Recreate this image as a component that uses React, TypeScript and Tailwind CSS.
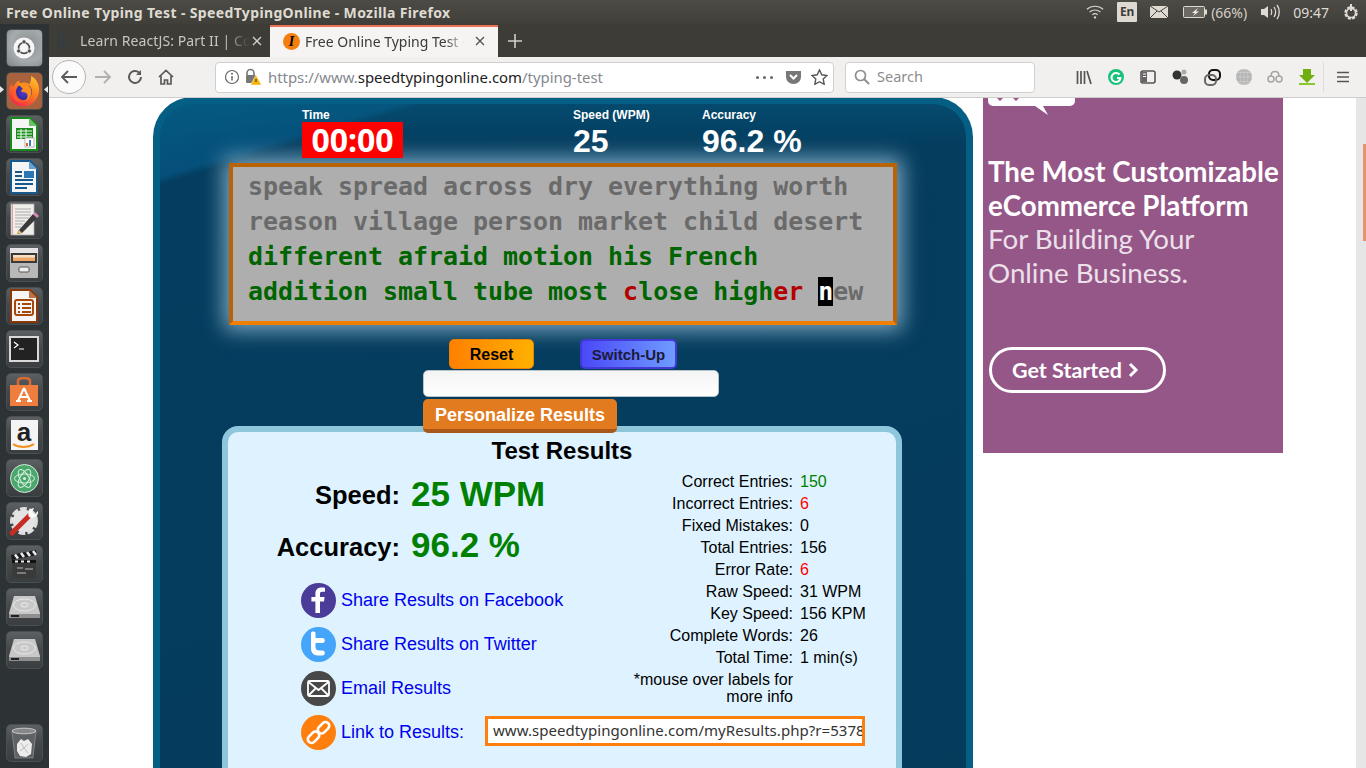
import React from "react";

const UI = '"Noto Sans","Open Sans",sans-serif';

function Tile({ children }: { children: React.ReactNode }) {
  return (
    <div className="w-[37px] h-[38px] shrink-0 rounded-[5px] border border-[#4a4f52] bg-[linear-gradient(180deg,#5d6062_0%,#45494c_45%,#3a3e41_100%)] flex items-center justify-center overflow-hidden">
      {children}
    </div>
  );
}

function Drive() {
  return (
    <svg width="33" height="24" viewBox="0 0 33 24"><path d="M6 1h21l5 17v5H1v-5z" fill="#c8c8c8" /><ellipse cx="16.500" cy="10" rx="11" ry="6" fill="none" stroke="#e8e8e8" strokeWidth="1" /><ellipse cx="16.500" cy="10" rx="3.500" ry="2" fill="none" stroke="#eee" /><path d="M1 19h31v4H1z" fill="#8f8f8f" /><path d="M3 20h8v2H3z" fill="#222" /></svg>
  );
}

function Launcher() {
  return (
    <div className="relative w-[49px] shrink-0 bg-[#2d3235] flex flex-col items-center pt-[5px] pb-[6px] gap-[5px] pr-[1px]">
      <Tile>
        <div className="w-[37px] h-[38px] bg-[radial-gradient(circle_at_60%_40%,#8a9092,#a6acae_55%,#7b8285)] flex items-center justify-center">
          <svg width="24" height="24" viewBox="0 0 24 24"><circle cx="12" cy="12" r="10.500" fill="#f6f6f6" /><circle cx="12" cy="12" r="5.400" fill="none" stroke="#4a4a4a" strokeWidth="1.600" /><circle cx="12" cy="5.800" r="2" fill="#4a4a4a" stroke="#f6f6f6" strokeWidth=".7" /><circle cx="6.600" cy="15" r="2" fill="#4a4a4a" stroke="#f6f6f6" strokeWidth=".7" /><circle cx="17.400" cy="15" r="2" fill="#4a4a4a" stroke="#f6f6f6" strokeWidth=".7" /></svg>
        </div>
      </Tile>
      <Tile>
        <div className="w-[37px] h-[38px] bg-[#a8623e] flex items-center justify-center">
          <svg width="32" height="33" viewBox="0 0 32 33">
            <defs>
              <linearGradient id="ffa" x1="0.800" y1="0" x2="0.200" y2="1"><stop offset="0" stopColor="#ffc12b" /><stop offset="0.45" stopColor="#ff7a1f" /><stop offset="1" stopColor="#f0224f" /></linearGradient>
              <radialGradient id="ffb"><stop offset="0" stopColor="#5a3bd6" /><stop offset="1" stopColor="#2d2a9a" /></radialGradient>
            </defs>
            <path d="M23 1c6 3 8.500 9 8 15-.8 9-7.500 15.500-16 15.500S1 25 1 17c0-3 1-6 2.500-8 .3 1.500 1 2.500 2 3 1-3 3-5.500 6-6.500-.3 1-.2 2 .5 2.800 3-1.600 7-1 9.500 1 1-2.500 2-5 1.500-8.300z" fill="url(#ffa)" />
            <circle cx="16" cy="17" r="8" fill="url(#ffb)" />
            <path d="M10 9c5-2.500 11 0 13 5 2 6-2 12-8 12.500 3.500-1.500 5-4 4.500-6.500-.5-2.500-3-3.500-6-3-.5-1.500 0-2.500 1.500-3-1.500-1.500-3-3-5-5z" fill="#ff8f1c" />
            <path d="M6 14c0 8 5 13 12 13-7 3-14-3-14-10z" fill="#ff5a2a" />
          </svg>
        </div>
      </Tile>
      <Tile>
        <svg width="28" height="34" viewBox="0 0 28 34"><path d="M1 1h19l7 7v25H1z" fill="#f5f5f5" stroke="#1a8a1a" strokeWidth="2" /><path d="M19 1l8 8h-8z" fill="#6cc06c" /><path d="M6 11h17v11H6z" fill="#1a8a1a" /><path d="M7 14h15M7 17h15M7 20h15M11 12v10M16 12v10" stroke="#f0fff0" strokeWidth="1" /><rect x="15" y="21" width="9" height="9" fill="#fff" stroke="#888" strokeWidth=".6" /><path d="M17 29v-3" stroke="#e06020" strokeWidth="2" /><path d="M20 29v-6" stroke="#3a7fc0" strokeWidth="2" /></svg>
      </Tile>
      <Tile>
        <svg width="28" height="34" viewBox="0 0 28 34"><path d="M1 1h19l7 7v25H1z" fill="#f5f5f5" stroke="#17598c" strokeWidth="2" /><path d="M19 1l8 8h-8z" fill="#6aa0cc" /><rect x="14" y="11" width="10" height="7" fill="#2b76b4" /><path d="M5 12h7M5 16h7M5 20h18M5 24h18M5 28h12" stroke="#17598c" strokeWidth="2" /></svg>
      </Tile>
      <Tile>
        <svg width="30" height="34" viewBox="0 0 30 34"><rect x="2" y="1" width="23" height="31" fill="#f0eeea" stroke="#aaa" strokeWidth=".8" /><path d="M3.500 1v31" stroke="#e08a8a" strokeWidth=".8" /><path d="M6 6h16M6 9h16M6 12h16M6 15h14M6 18h10M6 21h8M6 24h6" stroke="#aaa" strokeWidth="1" /><path d="M10 27L24 11l4 4-15 15-5 1z" fill="#3a3a3a" /><path d="M24 11l2-2 4 4-2 2z" fill="#d88ac0" /><path d="M8 31l2-4 3 3z" fill="#f0c060" /></svg>
      </Tile>
      <Tile>
        <svg width="30" height="32" viewBox="0 0 30 32"><rect x="1" y="1" width="28" height="30" rx="1" fill="#b8b8b8" /><rect x="1" y="1" width="28" height="5" fill="#e4e4e4" /><rect x="2" y="6" width="26" height="10" fill="#3a3a3a" /><rect x="4" y="8" width="22" height="6" fill="#eda867" /><rect x="4" y="8" width="22" height="2.500" fill="#f8e0c4" /><rect x="10" y="20" width="10" height="5" rx="1" fill="#eee" stroke="#555" /></svg>
      </Tile>
      <Tile>
        <svg width="28" height="34" viewBox="0 0 28 34"><path d="M1 1h19l7 7v25H1z" fill="#f5f5f5" stroke="#8a3808" strokeWidth="2" /><path d="M19 1l8 8h-8z" fill="#b8734a" /><rect x="5" y="11" width="18" height="15" rx="2" fill="#f5f5f5" stroke="#a84808" strokeWidth="2" /><path d="M8 15h2M12 15h9M8 19h2M12 19h9M8 23h2M12 23h9" stroke="#a84808" strokeWidth="2" /></svg>
      </Tile>
      <Tile>
        <svg width="30" height="26" viewBox="0 0 30 26"><rect x="0" y="0" width="30" height="26" fill="#d8d8d8" /><rect x="2" y="2" width="26" height="22" fill="#222" /><path d="M5 6l4 3-4 3" fill="none" stroke="#fff" strokeWidth="1.200" /><path d="M10 13h5" stroke="#fff" strokeWidth="1.200" /></svg>
      </Tile>
      <Tile>
        <svg width="30" height="30" viewBox="0 0 30 30"><path d="M1 8h28v21H1z" fill="#ef7d3d" /><path d="M9 8V4c0-4 12-4 12 0v4" fill="none" stroke="#d96a30" strokeWidth="2.500" /><path d="M15 11l-6 13M15 11l6 13M10 20h10M7 24h5M18 24h5" stroke="#fff" strokeWidth="2" /></svg>
      </Tile>
      <Tile>
        <div className="w-[27px] h-[30px] bg-[#f4f4f4] flex flex-col items-center justify-center">
          <span className="text-[26px] leading-[22px] font-bold text-[#222]" style={{ fontFamily: "Liberation Sans,sans-serif" }}>a</span>
          <svg width="24" height="6" viewBox="0 0 24 6"><path d="M1 1c6 4 15 4 21 0" fill="none" stroke="#f0931e" strokeWidth="2" /></svg>
        </div>
      </Tile>
      <Tile>
        <svg width="29" height="29" viewBox="0 0 29 29"><circle cx="14.500" cy="14.500" r="14" fill="#4ba86c" stroke="#d8e8dc" /><g fill="none" stroke="#d8f0e0" strokeWidth="1"><ellipse cx="14.500" cy="14.500" rx="10" ry="4.500" /><ellipse cx="14.500" cy="14.500" rx="10" ry="4.500" transform="rotate(60 14.500 14.500)" /><ellipse cx="14.500" cy="14.500" rx="10" ry="4.500" transform="rotate(120 14.500 14.500)" /></g><circle cx="14.500" cy="14.500" r="1.500" fill="#d8f0e0" /></svg>
      </Tile>
      <Tile>
        <svg width="32" height="32" viewBox="0 0 32 32"><circle cx="16" cy="16" r="11" fill="#dcdcdc" stroke="#dedede" strokeWidth="6" strokeDasharray="6 2" /><circle cx="16" cy="16" r="11" fill="#e4e4e4" /><path d="M4 28L22 10" stroke="#c52c24" strokeWidth="5" strokeLinecap="round" /><path d="M21 12a6 6 0 0 1 5-9l-2 4 3 2 3-3a6 6 0 0 1-9 6z" fill="#f8f8f8" /></svg>
      </Tile>
      <Tile>
        <svg width="28" height="30" viewBox="0 0 28 30"><rect x="2" y="11" width="24" height="18" fill="#3a3a3a" /><path d="M1 6l25-5 1 5-25 5z" fill="#1a1a1a" /><path d="M5 5.500l3 4M11 4l3 4M17 3l3 4M23 2l3 4" stroke="#eee" strokeWidth="2.500" /><path d="M2 11h24v3H2z" fill="#111" /><path d="M5 12.500h18" stroke="#eee" strokeWidth="2" strokeDasharray="3 3" /><path d="M7 19h6M15 20h8M7 24h9" stroke="#bbb" strokeWidth="1.200" /></svg>
      </Tile>
      <Tile>
        <Drive />
      </Tile>
      <Tile>
        <Drive />
      </Tile>
      <div className="mt-auto">
        <Tile>
          <svg width="26" height="33" viewBox="0 0 26 33"><path d="M1 4h24l-3 27H4z" fill="#5f6264" stroke="#9a9a9a" strokeWidth=".6" /><ellipse cx="13" cy="4" rx="12" ry="2.800" fill="#85888a" stroke="#c8c8c8" /><path d="M6 17l4-5 3 2 4-2 4 5-1 10-5 3-6-1-3-5z" fill="#ececec" /><path d="M10 16l3 5 4-4M9 24l4-3 4 5" fill="none" stroke="#bdbdbd" /></svg>
        </Tile>
      </div>
      <svg width="4" height="7" viewBox="0 0 4 7" className="absolute left-0 top-[62px]"><path d="M0 0l4 3.500L0 7z" fill="#e8e8e8" /></svg>
      <svg width="4" height="7" viewBox="0 0 4 7" className="absolute left-[44px] top-[62px]"><path d="M4 0L0 3.500 4 7z" fill="#e8e8e8" /></svg>
    </div>
  );
}

function TitleBar() {
  return (
    <div className="h-[24px] shrink-0 bg-[linear-gradient(180deg,#4d4b45,#413f3a)] flex items-center text-[#dfdbd2] text-[14px] font-bold" style={{ fontFamily: UI }}>
      <span className="pl-[6px] tracking-[0.36px]">Free Online Typing Test - SpeedTypingOnline - Mozilla Firefox</span>
      <div className="ml-auto flex items-center h-full font-normal text-[14px]">
        <svg width="18" height="16" viewBox="0 0 20 16" className="mr-[13px]"><g fill="none" stroke="#d8d4cc" strokeWidth="1.300"><path d="M1 5c5-4.500 13-4.500 18 0" /><path d="M4 8c3.500-3 8.500-3 12 0" /><path d="M7 11c2-1.500 4-1.500 6 0" /></g><circle cx="10" cy="14" r="1.300" fill="#d8d4cc" /></svg>
        <span className="w-[20px] h-[20px] bg-[#dedad2] text-[#3f3d38] rounded-[1px] text-[12px] font-bold flex items-center justify-center mr-[13px]">En</span>
        <svg width="18" height="12" viewBox="0 0 18 12" className="mr-[15px]"><rect width="18" height="12" rx="1" fill="#dedad2" /><path d="M0 0l9 6 9-6M0 12l7-7M18 12l-7-7" fill="none" stroke="#46443e" strokeWidth="1" /></svg>
        <svg width="24" height="12" viewBox="0 0 24 12" className="mr-[4px]"><rect x=".5" y=".5" width="21" height="11" rx="1" fill="#6b6962" stroke="#dedad2" /><rect x="22" y="3.500" width="2" height="5" fill="#dedad2" /><path d="M15 2L9 7h3l-2 3 6-4.500h-3z" fill="#eee" /></svg>
        <span className="mr-[13px] text-[#d4d0c8]">(66%)</span>
        <svg width="20" height="16" viewBox="0 0 20 16" className="mr-[13px]"><path d="M1 5h3l4-3v12l-4-3H1z" fill="#dedad2" /><path d="M11 5c1 2 1 4 0 6M14 3c2 3 2 7 0 10M17 1c3 4 3 10 0 14" fill="none" stroke="#dedad2" strokeWidth="1.300" /></svg>
        <span className="mr-[14px] text-[#dedad2]">09:47</span>
        <svg width="16" height="18" viewBox="0 0 16 18" className="mr-[7px]"><circle cx="8" cy="10" r="5.500" fill="none" stroke="#dedad2" strokeWidth="2.500" strokeDasharray="3 1.300" /><circle cx="8" cy="10" r="4.500" fill="none" stroke="#dedad2" strokeWidth="1.500" /><path d="M8 1v7" stroke="#dedad2" strokeWidth="2" /></svg>
      </div>
    </div>
  );
}

function TabStrip() {
  return (
    <div className="h-[33px] shrink-0 bg-[#3e3c37] flex items-end text-[14px]" style={{ fontFamily: UI }}>
      <div className="w-[221px] h-[32px] flex items-center text-[#c8c6c0] pl-[8px] pb-[1px]">
        <svg width="16" height="16" viewBox="0 0 16 16" className="mr-[7px] shrink-0"><path d="M2 2h5v12H2zM11 14h4" fill="none" stroke="#2a4050" strokeWidth="1.200" /></svg>
        <span className="w-[170px] overflow-hidden whitespace-nowrap tracking-[0.1px] [mask-image:linear-gradient(90deg,#000_85%,transparent)]">Learn ReactJS: Part II | Co</span>
        <svg width="12" height="12" viewBox="0 0 12 12" className="ml-[1px] shrink-0"><path d="M2 2l8 8M10 2l-8 8" stroke="#d0cec8" strokeWidth="1.400" /></svg>
      </div>
      <div className="w-[228px] h-[32px] bg-[#f5f4f2] border-t-2 border-[#ec7350] flex items-center text-[#3a3a3a] pl-[13px] pb-[2px]">
        <span className="w-[17px] h-[17px] shrink-0 rounded-full bg-[#f57f0e] flex items-center justify-center text-black text-[14px] font-bold italic mr-[5px]" style={{ fontFamily: "Liberation Serif,serif" }}>I</span>
        <span className="w-[160px] overflow-hidden whitespace-nowrap [mask-image:linear-gradient(90deg,#000_88%,transparent)]">Free Online Typing Test -</span>
        <svg width="12" height="12" viewBox="0 0 12 12" className="ml-[9px] shrink-0"><path d="M2 2l8 8M10 2l-8 8" stroke="#555" strokeWidth="1.400" /></svg>
      </div>
      <svg width="16" height="16" viewBox="0 0 16 16" className="ml-[9px] mb-[8px]"><path d="M8 1v14M1 8h14" stroke="#d0cec8" strokeWidth="1.600" /></svg>
    </div>
  );
}

function NavBar() {
  const st = { fill: "none", stroke: "#5a5a5a", strokeWidth: 1.8 };
  return (
    <div className="h-[41px] shrink-0 bg-[#f1f0ee] border-b border-[#cdcdcd] flex items-center" style={{ fontFamily: UI }}>
      <div className="ml-[3px] w-[34px] h-[34px] rounded-full border border-[#b5b5b5] bg-[#fbfbfb] flex items-center justify-center">
        <svg width="18" height="16" viewBox="0 0 18 16"><path d="M17 8H2M8 2L2 8l6 6" {...st} /></svg>
      </div>
      <svg width="18" height="16" viewBox="0 0 18 16" className="ml-[8px]"><path d="M1 8h15M10 2l6 6-6 6" fill="none" stroke="#b0b0b0" strokeWidth="1.800" /></svg>
      <svg width="16" height="16" viewBox="0 0 16 16" className="ml-[15px]"><path d="M14 8a6 6 0 1 1-2-4.500" fill="none" stroke="#5a5a5a" strokeWidth="2" /><path d="M14 1v5H9z" fill="#5a5a5a" /></svg>
      <svg width="16" height="16" viewBox="0 0 16 16" className="ml-[15px]"><path d="M1 8l7-6.500L15 8M3 7v8h3.500v-4h3v4H13V7" fill="none" stroke="#5a5a5a" strokeWidth="1.700" /></svg>
      <div className="ml-[41px] w-[619px] h-[31px] bg-white border border-[#cfcfcf] rounded-[4px] flex items-center text-[14.900px] text-[#85898f]">
        <svg width="16" height="16" viewBox="0 0 16 16" className="ml-[8px]"><circle cx="8" cy="8" r="6.500" fill="none" stroke="#666" strokeWidth="1.200" /><path d="M8 7v4.500" stroke="#666" strokeWidth="1.500" /><circle cx="8" cy="4.800" r="1" fill="#666" /></svg>
        <svg width="18" height="18" viewBox="0 0 18 18" className="ml-[4px] mr-[6px]"><path d="M3 7V5a3.500 3.500 0 0 1 7 0v2" fill="none" stroke="#777" strokeWidth="1.600" /><rect x="2" y="7" width="10" height="8" rx="1" fill="#777" /><path d="M12 7l5.500 10h-11z" fill="#f7b500" stroke="#fff" strokeWidth=".5" /><path d="M12 11v3" stroke="#333" strokeWidth="1.100" /></svg>
        <span>https://www.<span className="text-[#1c1c1c]">speedtypingonline.com</span>/typing-test</span>
        <svg width="17" height="3" viewBox="0 0 17 3" className="ml-auto mr-[12px]"><circle cx="1.500" cy="1.500" r="1.500" fill="#666" /><circle cx="8.500" cy="1.500" r="1.500" fill="#666" /><circle cx="15.500" cy="1.500" r="1.500" fill="#666" /></svg>
        <svg width="17" height="16" viewBox="0 0 17 16" className="mr-[9px]"><path d="M1 2h15v6a7.500 7 0 0 1-15 0z" fill="#777" /><path d="M5 6l3.500 3.500L12 6" fill="none" stroke="#fff" strokeWidth="2" /></svg>
        <svg width="17" height="16" viewBox="0 0 17 16" className="mr-[5px]"><path d="M8.500 1l2.300 4.800 5.200.7-3.800 3.600 1 5.200-4.700-2.600-4.700 2.600 1-5.200L1 6.500l5.200-.7z" fill="none" stroke="#555" strokeWidth="1.400" /></svg>
      </div>
      <div className="ml-[11px] w-[190px] h-[31px] bg-white border border-[#cfcfcf] rounded-[4px] flex items-center text-[14.500px] text-[#8d8d8d]">
        <svg width="16" height="16" viewBox="0 0 16 16" className="ml-[8px] mr-[7px]"><circle cx="6.500" cy="6.500" r="5" fill="none" stroke="#8d8d8d" strokeWidth="1.700" /><path d="M10 10l5 5" stroke="#8d8d8d" strokeWidth="2" /></svg>
        Search
      </div>
      <div className="flex items-center ml-[41px] h-full">
        <svg width="16" height="16" viewBox="0 0 16 16"><path d="M1.500 2v13M5 2v13M8.500 2v13M11 2l4 13" fill="none" stroke="#555" strokeWidth="1.700" /></svg>
        <svg width="16" height="16" viewBox="0 0 16 16" className="ml-[16px]"><circle cx="8" cy="8" r="8" fill="#16c27a" /><path d="M11.500 5.500A4.500 4.500 0 1 0 12.500 9H9" fill="none" stroke="#fff" strokeWidth="2" /></svg>
        <svg width="16" height="14" viewBox="0 0 16 14" className="ml-[16px]"><rect x="1" y="1" width="14" height="12" rx="2" fill="none" stroke="#555" strokeWidth="1.600" /><rect x="2" y="2" width="5" height="10" fill="#666" /><path d="M3 4h3M3 6.500h3" stroke="#fff" strokeWidth="1" /></svg>
        <svg width="17" height="16" viewBox="0 0 17 16" className="ml-[16px]"><circle cx="5" cy="6" r="4.500" fill="#333" /><circle cx="12" cy="11" r="4" fill="#666" /><circle cx="12" cy="3" r="2.500" fill="#aaa" /></svg>
        <svg width="17" height="17" viewBox="0 0 17 17" className="ml-[15px]"><rect x="5" y="1" width="11" height="10" rx="4" fill="none" stroke="#111" strokeWidth="2" /><rect x="1" y="6" width="11" height="10" rx="4" fill="none" stroke="#666" strokeWidth="2" /></svg>
        <svg width="16" height="16" viewBox="0 0 16 16" className="ml-[15px]"><circle cx="8" cy="8" r="8" fill="#b4b4b4" /><path d="M0 8h16M8 0v16M2 3.500h12M2 12.500h12" stroke="#cdcdcd" strokeWidth=".8" /><ellipse cx="8" cy="8" rx="4" ry="8" fill="none" stroke="#cdcdcd" strokeWidth=".8" /></svg>
        <svg width="16" height="14" viewBox="0 0 16 14" className="ml-[15px]"><g fill="none" stroke="#a4a4a4" strokeWidth="1.500"><circle cx="4" cy="9" r="3" /><circle cx="12" cy="9" r="3" /><path d="M4 6c0-6 8-6 8 0" /></g></svg>
        <svg width="16" height="16" viewBox="0 0 16 16" className="ml-[16px]"><path d="M4 0h8v6h4l-8 8-8-8h4z" fill="#6fb010" /><path d="M0 14h16v2H0z" fill="#8ac832" /></svg>
        <div className="w-px h-[30px] bg-[#dcdcdc] ml-[8px]" />
        <svg width="14" height="12" viewBox="0 0 14 12" className="ml-[12px]"><path d="M1 1.500h12M1 6h12M1 10.500h12" stroke="#555" strokeWidth="1.700" /></svg>
      </div>
    </div>
  );
}

function Stats() {
  return (
    <div className="flex text-white font-bold h-[59px] pt-[4px]">
      <div className="ml-[142px] w-[101px]">
        <div className="text-[12px] leading-[14px]">Time</div>
        <div className="h-[36px] bg-[#ff0000] text-[32px] leading-[36px] text-center font-bold" style={{ fontFamily: "Noto Sans,sans-serif" }}>00:00</div>
      </div>
      <div className="ml-[170px] w-[129px]">
        <div className="text-[12px] leading-[14px]">Speed (WPM)</div>
        <div className="text-[32px] leading-[38px]">25</div>
      </div>
      <div>
        <div className="text-[12px] leading-[14px]">Accuracy</div>
        <div className="text-[32px] leading-[38px]">96.2 %</div>
      </div>
    </div>
  );
}

function TextBox() {
  return (
    <div className="ml-[69px] w-[668px] h-[162px] border-[4px] border-[#b86305] border-b-[#f07f05] bg-[#aeaeae] shadow-[0_0_20px_5px_rgba(180,215,235,0.7)] pl-[15px] pt-[2px] text-[24.930px] leading-[35px] font-bold text-[#6a6a6a] whitespace-pre" style={{ fontFamily: "DejaVu Sans Mono,monospace" }}>
      <div>speak spread across dry everything worth</div>
      <div>reason village person market child desert</div>
      <div className="text-[#006400]">different afraid motion his French</div>
      <div className="text-[#006400]">
        addition small tube most <span className="text-[#b30000]">c</span>lose high<span className="text-[#b30000]">er</span> <span className="bg-black text-white">n</span><span className="text-[#6a6a6a]">ew</span>
      </div>
    </div>
  );
}

function Controls() {
  return (
    <div className="flex flex-col items-start ml-[263px] pt-[14px]">
      <div className="flex">
        <div className="ml-[26px] w-[85px] h-[30px] rounded-[5px] border border-[#f07f00] bg-[linear-gradient(90deg,#ff8000,#ffb000)] text-black font-bold text-[16px] leading-[30px] text-center">Reset</div>
        <div className="ml-[46px] w-[97px] h-[30px] rounded-[5px] border-2 border-[#4338d8] bg-[linear-gradient(90deg,#4a48f8,#6f9cff)] text-[#1b1b3a] font-bold text-[15px] leading-[27px] text-center">Switch-Up</div>
      </div>
      <div className="mt-[1px] w-[296px] h-[27px] rounded-[5px] border border-[#b8c4cc] bg-[linear-gradient(180deg,#f4f4f4,#ffffff)]" />
      <div className="relative mt-[2px] z-10 w-[194px] h-[34px] rounded-[5px] bg-[#e27b20] border-b-4 border-[#a8591a] text-white font-bold text-[18px] leading-[33px] text-center -mb-[7px]">Personalize Results</div>
    </div>
  );
}

function ShareRow({ color, children, icon }: { color: string; children: React.ReactNode; icon: React.ReactNode }) {
  return (
    <div className="flex items-center h-[44px]">
      <svg width="35" height="35" viewBox="0 0 35 35" className="shrink-0"><circle cx="17.500" cy="17.500" r="17.500" fill={color} />{icon}</svg>
      <span className="ml-[5px] text-[18px] text-[#0000ee] whitespace-nowrap">{children}</span>
    </div>
  );
}

function Results() {
  const rows: [string, string, string?][] = [
    ["Correct Entries:", "150", "text-[#008000]"],
    ["Incorrect Entries:", "6", "text-[#ff0000]"],
    ["Fixed Mistakes:", "0"],
    ["Total Entries:", "156"],
    ["Error Rate:", "6", "text-[#ff0000]"],
    ["Raw Speed:", "31 WPM"],
    ["Key Speed:", "156 KPM"],
    ["Complete Words:", "26"],
    ["Total Time:", "1 min(s)"],
  ];
  return (
    <div className="ml-[62px] w-[680px] h-[400px] rounded-[16px] border-[6px] border-[#8ec6db] bg-[#def3ff] text-black">
      <div className="text-[24px] leading-[28px] font-bold text-center pt-[5px] box-content">Test Results</div>
      <div className="flex mt-[6px]">
        <div className="w-[373px] shrink-0">
          <div className="flex items-center h-[46px]">
            <div className="w-[172px] text-right text-[25.500px] font-bold pt-[2px]">Speed:</div>
            <div className="ml-[11px] text-[35px] font-bold text-[#008000] leading-[46px]">25 WPM</div>
          </div>
          <div className="flex items-center h-[46px] mt-[5px]">
            <div className="w-[172px] text-right text-[25.500px] font-bold pt-[4px]">Accuracy:</div>
            <div className="ml-[11px] text-[35px] font-bold text-[#008000] leading-[46px]">96.2 %</div>
          </div>
          <div className="ml-[73px] mt-[10px]">
            <ShareRow color="#4a3c98" icon={<path d="M19 30V18.500h4l.6-4.500H19v-3c0-1.300.4-2.200 2.300-2.200H24V4.800C23.500 4.700 22 4.600 20.300 4.600c-3.500 0-5.900 2.100-5.900 6V14h-4v4.500h4V30z" fill="#fff" />}>Share Results on Facebook</ShareRow>
            <ShareRow color="#44a5fa" icon={<path d="M10 6c0-2 4.500-2 4.500 0v5h7c3 0 3 5 0 5h-7v4c0 2.500 1.500 3.500 4 3.500h3c3 0 3 5 0 5h-5c-4 0-6.500-3-6.500-7z" fill="#fff" />}>Share Results on Twitter</ShareRow>
            <ShareRow color="#484848" icon={<g fill="none" stroke="#fff" strokeWidth="1.800"><rect x="7" y="10" width="21" height="15" rx="1.500" /><path d="M7.500 11l10 8 10-8M8 24l7-7M27 24l-7-7" /></g>}>Email Results</ShareRow>
            <div className="flex items-center h-[44px] w-[564px]">
              <svg width="35" height="35" viewBox="0 0 35 35" className="shrink-0"><circle cx="17.500" cy="17.500" r="17.500" fill="#ff7f0e" /><g fill="none" stroke="#fff" strokeWidth="2.600"><rect x="6" y="18.500" width="13" height="7.500" rx="3.700" transform="rotate(-45 12.500 22.200)" /><rect x="16" y="9" width="13" height="7.500" rx="3.700" transform="rotate(-45 22.500 12.700)" /></g></svg>
              <span className="ml-[5px] text-[18px] text-[#0000ee] w-[144px] shrink-0 whitespace-nowrap">Link to Results:</span>
              <div className="w-[380px] shrink-0 h-[30px] -mt-[2px] bg-white border-[3px] border-[#ff7f0e] text-[15px] leading-[22px] pl-[5px] overflow-hidden whitespace-nowrap text-[#333] tracking-[0.05px]" style={{ fontFamily: "Noto Sans,sans-serif" }}>www.speedtypingonline.com/myResults.php?r=53789</div>
            </div>
          </div>
        </div>
        <div className="text-[16px] leading-[22px] ml-[11px]">
          {rows.map(([l, v, c]) => (
            <div key={l} className="flex">
              <div className="w-[181px] text-right">{l}</div>
              <div className={`ml-[7px] ${c ?? ""}`}>{v}</div>
            </div>
          ))}
          <div className="w-[181px] text-right leading-[17px] pt-[2px]">*mouse over labels for more info</div>
        </div>
      </div>
    </div>
  );
}

function Ad() {
  return (
    <div className="w-[300px] h-[355px] shrink-0 ml-[10px] bg-[#955788] text-white overflow-hidden" style={{ fontFamily: "Lato,sans-serif" }}>
      <svg width="92" height="17" viewBox="0 0 92 17" className="block"><path d="M5 0h87v3a5 5 0 0 1-5 5H60l5 9-13-9H10a5 5 0 0 1-5-5z" fill="#fff" /><path d="M14 0l3 3 3-3M30 0l3 3 3-3" fill="#955788" /></svg>
      <div className="pl-[5px] pt-[40px] text-[27.700px] leading-[33.500px] font-bold whitespace-nowrap">
        <div>The Most Customizable</div>
        <div>eCommerce Platform</div>
        <div className="font-normal text-[#ece0ea]">For Building Your</div>
        <div className="font-normal text-[#ece0ea]">Online Business.</div>
      </div>
      <div className="ml-[6px] mt-[58px] w-[177px] h-[46px] rounded-[23px] border-[3px] border-white text-[21.500px] font-bold leading-[40px] pl-[20px] flex items-center">
        Get Started
        <svg width="12" height="16" viewBox="0 0 12 16" className="ml-[6px]"><path d="M2 2l6 6-6 6" fill="none" stroke="#fff" strokeWidth="3" /></svg>
      </div>
    </div>
  );
}

export default function App() {
  return (
    <div className="w-[1366px] h-[768px] overflow-hidden flex flex-col bg-white" style={{ fontFamily: "Liberation Sans,Arial,sans-serif" }}>
      <TitleBar />
      <div className="flex flex-1 min-h-0">
        <Launcher />
        <div className="flex-1 min-w-0 flex flex-col">
          <TabStrip />
          <NavBar />
          <div className="flex-1 min-h-0 flex bg-white overflow-hidden">
            <div className="flex-1 flex pl-[104px]">
              <div className="w-[820px] h-[800px] shrink-0 rounded-t-[40px] border-[7px] border-[#055e84] border-b-0 bg-[linear-gradient(180deg,rgba(6,95,135,0.4)_0px,transparent_42px),linear-gradient(163deg,#05567e_0%,#05507a_7%,#043d5f_7.8%,#053c5c_100%)] -mt-[1px] overflow-hidden">
                <Stats />
                <TextBox />
                <Controls />
                <Results />
              </div>
              <Ad />
            </div>
            <div className="w-[10px] shrink-0 bg-[#e6e6e6] flex justify-end pt-[46px]">
              <div className="w-[3px] h-[97px] bg-[#e8936a]" />
            </div>
          </div>
        </div>
      </div>
    </div>
  );
}
